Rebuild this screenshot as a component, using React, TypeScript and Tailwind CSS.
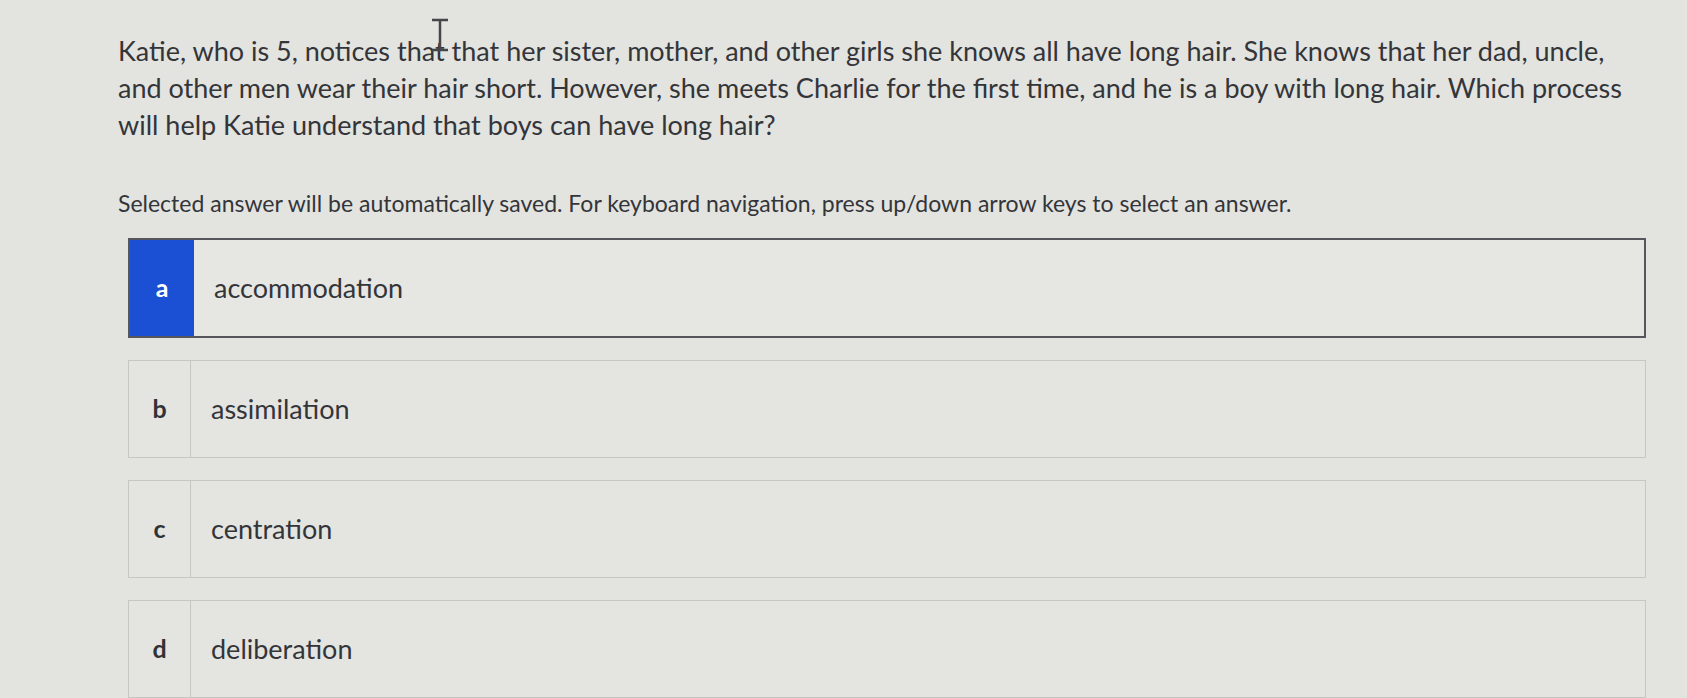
import React from "react";

const options = [
  { key: "a", label: "accommodation", selected: true },
  { key: "b", label: "assimilation", selected: false },
  { key: "c", label: "centration", selected: false },
  { key: "d", label: "deliberation", selected: false },
];

function Option({ letter, label, selected }: { letter: string; label: string; selected: boolean }) {
  return (
    <div
      className={
        selected
          ? "flex h-[100px] border-[2px] border-[#55575d] bg-[#e6e6e3]"
          : "flex h-[98px] border border-[#c6c6c3] bg-[#e4e4e1]"
      }
    >
      <div
        className={
          selected
            ? "flex w-[64px] items-center justify-center bg-[#1b4fd4] text-[25px] font-bold text-white"
            : "flex w-[62px] items-center justify-center border-r border-[#c6c6c3] text-[25px] font-bold text-[#303236]"
        }
      >
        {letter}
      </div>
      <div className="flex items-center pl-[20px] text-[27px] text-[#333539]">{label}</div>
    </div>
  );
}

export default function App() {
  return (
    <div className="relative min-h-screen bg-[#e3e3e0] pl-[118px] pt-[32px] font-['Lato',sans-serif] text-[#333539]">
      {/* text cursor from the photo */}
      <svg className="absolute left-[429px] top-[18px]" width="22" height="34" viewBox="0 0 22 34">
        <path d="M3 2h16M11 2v30M3 32h16" stroke="#44464a" strokeWidth="2.5" fill="none" />
      </svg>
      <p className="w-[1540px] text-[27px] leading-[37px]">
        Katie, who is 5, notices that that her sister, mother, and other girls she knows all have long hair. She knows
        that her dad, uncle,
        <br />
        and other men wear their hair short. However, she meets Charlie for the first time, and he is a boy with long
        hair. Which process
        <br />
        will help Katie understand that boys can have long hair?
      </p>
      <p className="mt-[45px] text-[23px] leading-[30px]">
        Selected answer will be automatically saved. For keyboard navigation, press up/down arrow keys to select an
        answer.
      </p>
      <div className="ml-[10px] mt-[20px] flex w-[1518px] flex-col gap-[22px]">
        {options.map((o) => (
          <Option key={o.key} letter={o.key} label={o.label} selected={o.selected} />
        ))}
      </div>
    </div>
  );
}
